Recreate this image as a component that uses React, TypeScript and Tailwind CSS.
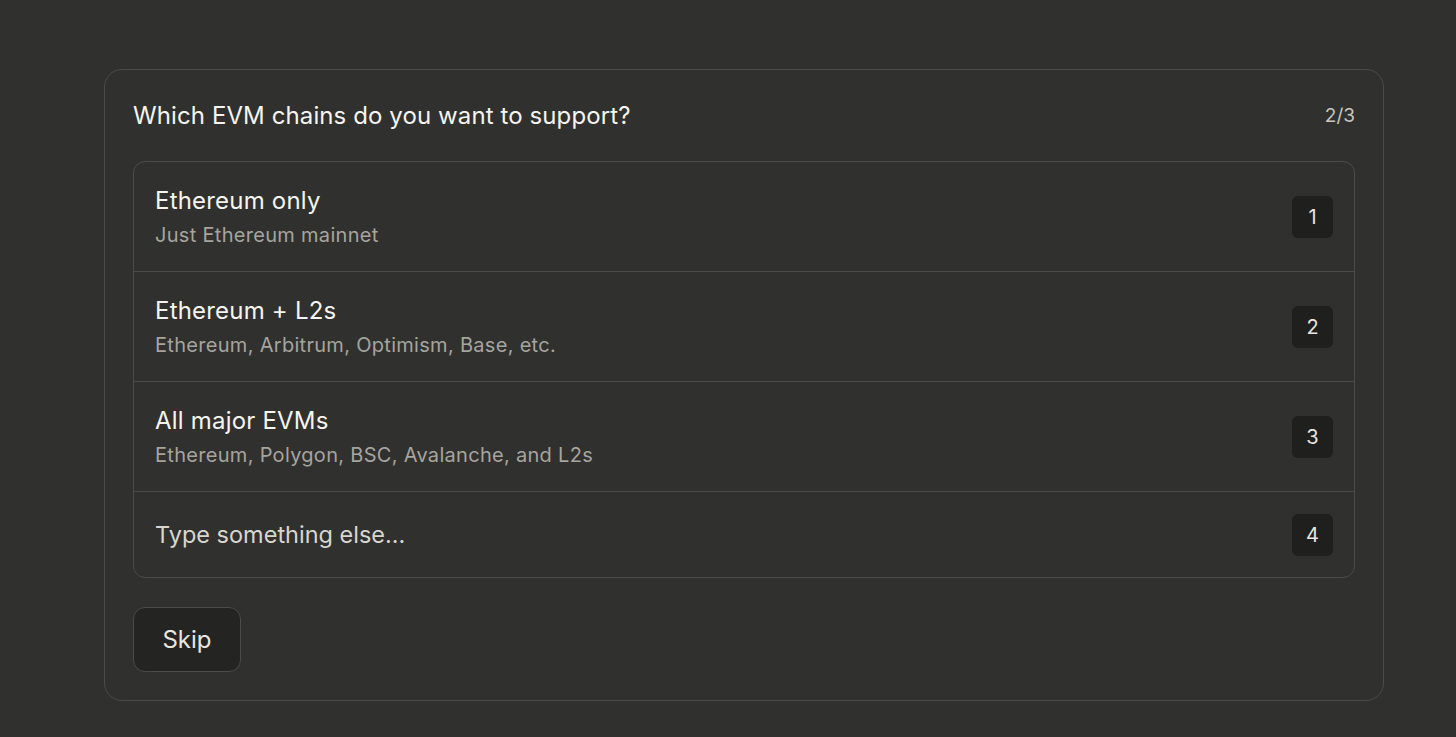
import React from "react";

const options = [
  { title: "Ethereum only", sub: "Just Ethereum mainnet", n: "1" },
  { title: "Ethereum + L2s", sub: "Ethereum, Arbitrum, Optimism, Base, etc.", n: "2" },
  { title: "All major EVMs", sub: "Ethereum, Polygon, BSC, Avalanche, and L2s", n: "3" },
];

function Badge({ n }: { n: string }) {
  return (
    <div className="w-[41px] h-[42px] rounded-[6px] bg-[#1f1f1e] flex items-center justify-center text-[20px] text-[#e8e6e0]">
      {n}
    </div>
  );
}

export default function App() {
  return (
    <div
      className="w-[1456px] h-[737px] bg-[#30302e] pt-[69px] pl-[104px]"
      style={{ fontFamily: "Inter, 'Noto Sans', sans-serif" }}
    >
      <div className="w-[1280px] h-[632px] border border-[#4b4b48] rounded-[18px] px-[28px] pt-[27px] pb-[28px]">
        <div className="flex items-center justify-between h-[38px]">
          <div className="text-[24px] text-[#f5f4ef] tracking-[0.1px]">Which EVM chains do you want to support?</div>
          <div className="text-[19px] text-[#c9c7c0]">2/3</div>
        </div>
        <div className="mt-[26px] border border-[#4b4b48] rounded-[12px]">
          {options.map((o) => (
            <div
              key={o.n}
              className="flex items-center justify-between h-[110px] border-b border-[#4b4b48] pl-[21px] pr-[21px]"
            >
              <div className="flex flex-col">
                <div className="text-[24px] leading-[32px] tracking-[0.2px] text-[#f5f4ef]">{o.title}</div>
                <div className="text-[20px] leading-[28px] tracking-[0.3px] mt-[4px] text-[#a6a49e]">{o.sub}</div>
              </div>
              <Badge n={o.n} />
            </div>
          ))}
          <div className="flex items-center justify-between h-[85px] pl-[21px] pr-[21px]">
            <div className="text-[23.5px] text-[#d8d6cf]">Type something else...</div>
            <Badge n="4" />
          </div>
        </div>
        <button className="mt-[29px] w-[108px] h-[65px] rounded-[12px] bg-[#242422] border border-[#4b4b48] text-[24px] text-[#e8e6e0]">
          Skip
        </button>
      </div>
    </div>
  );
}
